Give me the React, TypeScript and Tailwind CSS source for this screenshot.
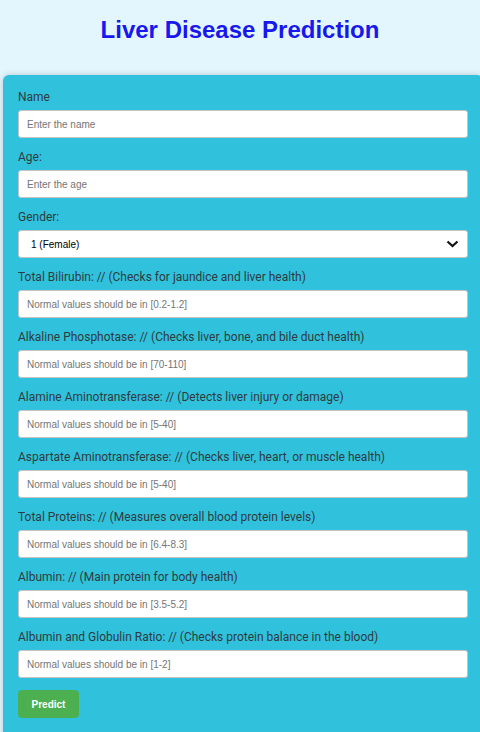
const fields = [
  { label: "Total Bilirubin: // (Checks for jaundice and liver health)", ph: "Normal values should be in [0.2-1.2]" },
  { label: "Alkaline Phosphotase: // (Checks liver, bone, and bile duct health)", ph: "Normal values should be in [70-110]" },
  { label: "Alamine Aminotransferase: // (Detects liver injury or damage)", ph: "Normal values should be in [5-40]" },
  { label: "Aspartate Aminotransferase: // (Checks liver, heart, or muscle health)", ph: "Normal values should be in [5-40]" },
  { label: "Total Proteins: // (Measures overall blood protein levels)", ph: "Normal values should be in [6.4-8.3]" },
  { label: "Albumin: // (Main protein for body health)", ph: "Normal values should be in [3.5-5.2]" },
  { label: "Albumin and Globulin Ratio: // (Checks protein balance in the blood)", ph: "Normal values should be in [1-2]" },
];

const inputCls =
  "block w-full h-[28px] bg-white border border-[#c4c4c4] rounded-[3px] px-[8px] text-[10px] text-black placeholder:text-[#757575] font-['Liberation_Sans',Arial,sans-serif] outline-none";
const labelCls = "block text-[12px] leading-[16px] text-[#2f3b3d] font-['Roboto','Liberation_Sans',sans-serif] mb-[5px]";

export default function App() {
  return (
    <div className="min-h-screen bg-[#e3f6fe] overflow-x-hidden">
      <h1 className="pt-[14px] h-[75px] text-center text-[24px] leading-[32px] font-bold text-[#1717ee] font-['Liberation_Sans',Arial,sans-serif]">
        Liver Disease Prediction
      </h1>
      <form className="ml-[3px] w-[480px] bg-[#30c2dd] rounded-[6px] shadow-[0_0_6px_rgba(0,0,0,0.2)] px-[15px] pt-[14px] pb-[20px]">
        <div>
          <label className={labelCls}>Name</label>
          <input type="text" placeholder="Enter the name" className={inputCls} />
        </div>
        <div className="mt-[11px]">
          <label className={labelCls}>Age:</label>
          <input type="text" placeholder="Enter the age" className={inputCls} />
        </div>
        <div className="mt-[11px]">
          <label className={labelCls}>Gender:</label>
          <div className="relative">
            <select
              defaultValue="1"
              className="block w-full h-[28px] appearance-none bg-white border border-[#c4c4c4] rounded-[3px] pl-[12px] text-[10px] text-black font-['Liberation_Sans',Arial,sans-serif] outline-none"
            >
              <option value="1">1 (Female)</option>
              <option value="0">0 (Male)</option>
            </select>
            <svg
              className="absolute right-[9px] top-[10px] pointer-events-none"
              width="13"
              height="8"
              viewBox="0 0 13 8"
              fill="none"
              stroke="#111"
              strokeWidth="2.2"
            >
              <path d="M1.5 1.5 L6.5 6 L11.5 1.5" />
            </svg>
          </div>
        </div>
        {fields.map((f) => (
          <div key={f.label} className="mt-[11px]">
            <label className={labelCls}>{f.label}</label>
            <input type="text" placeholder={f.ph} className={inputCls} />
          </div>
        ))}
        <button
          type="submit"
          className="mt-[12px] w-[61px] h-[28px] bg-[#4caf50] rounded-[4px] text-white text-[10px] font-bold font-['Liberation_Sans',Arial,sans-serif]"
        >
          Predict
        </button>
      </form>
    </div>
  );
}
